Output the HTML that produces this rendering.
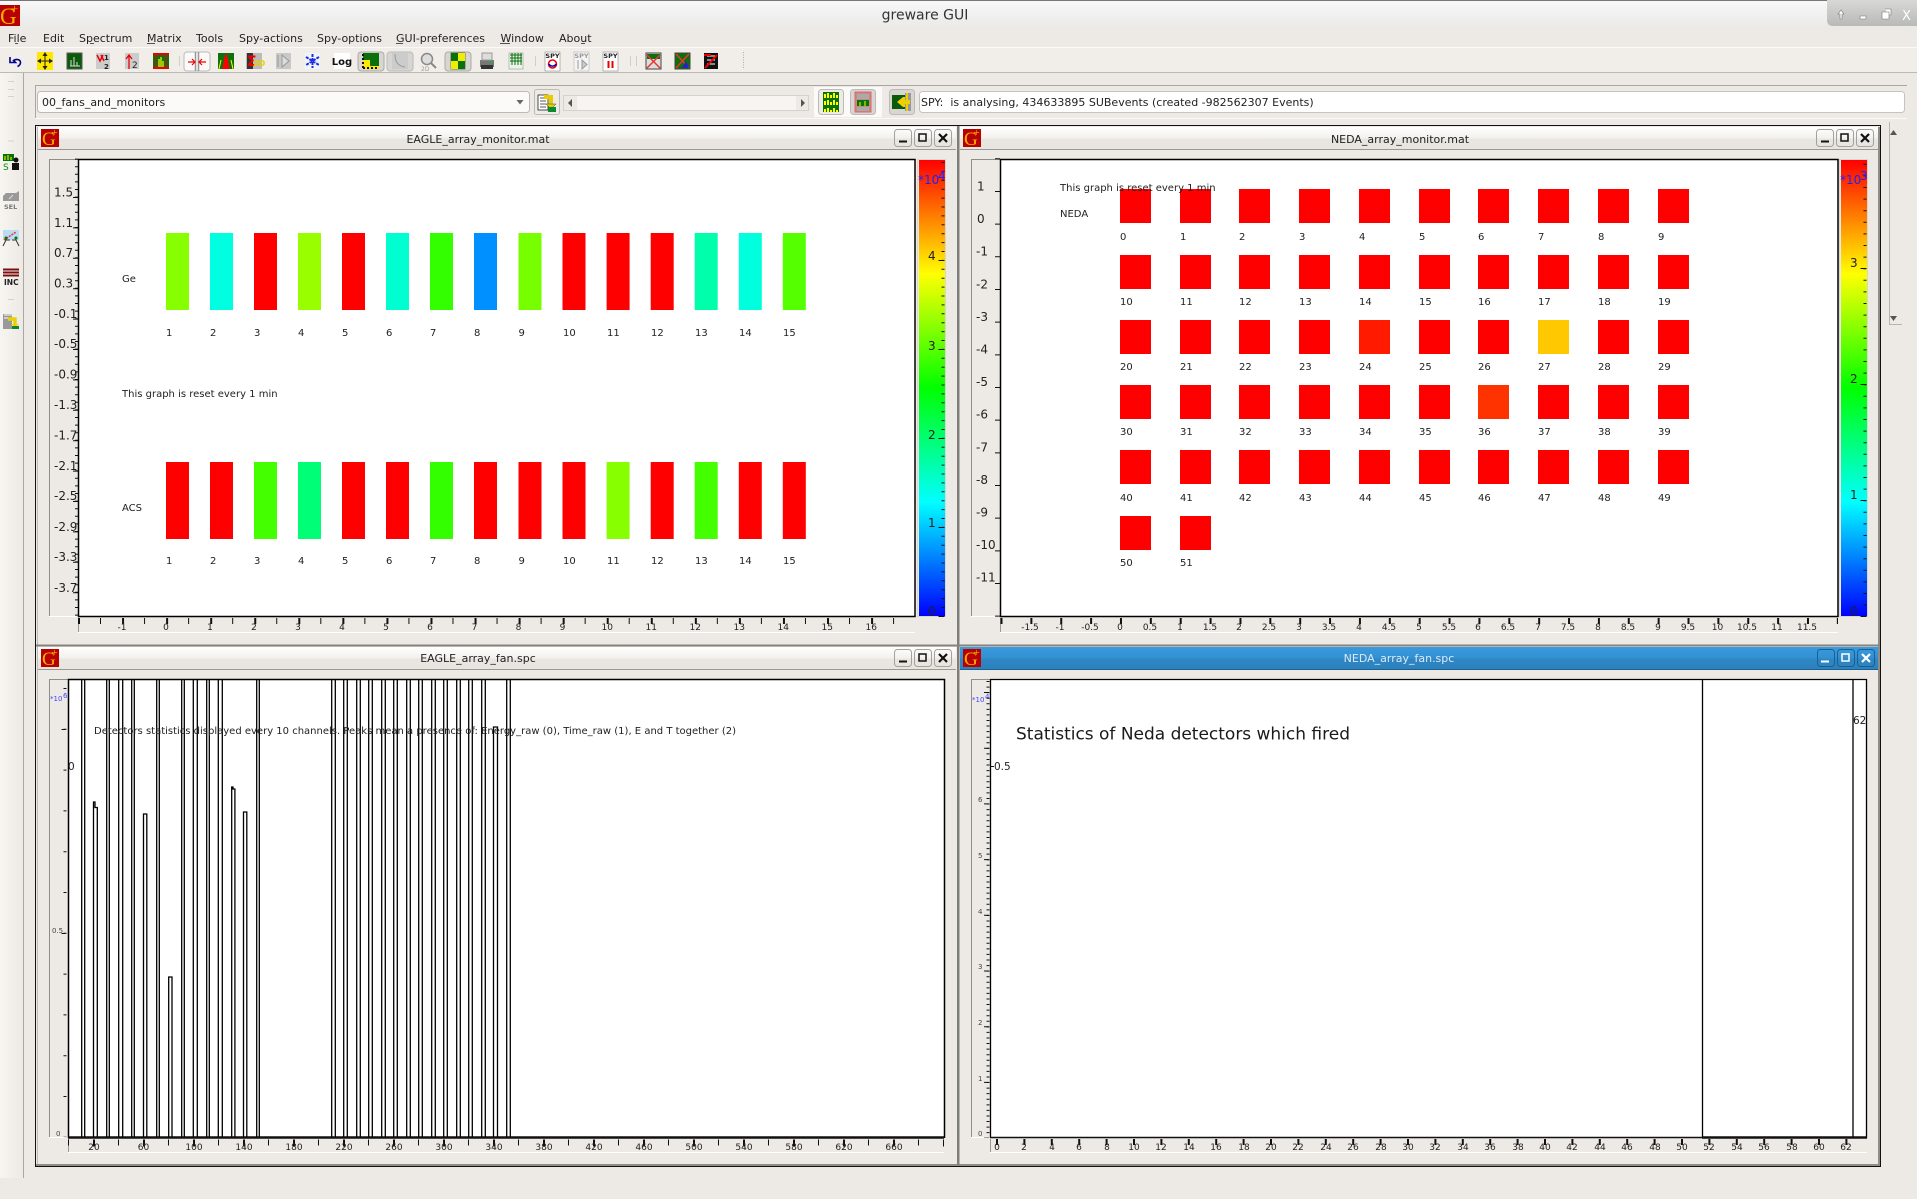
<!DOCTYPE html>
<html><head><meta charset="utf-8"><title>greware GUI</title>
<style>
html,body{margin:0;padding:0;width:1917px;height:1199px;overflow:hidden;background:#edeae5}
svg{display:block;font-family:"DejaVu Sans","Liberation Sans",sans-serif;fill:#222}
.m{font-size:11px}.t{font-size:11px;text-anchor:middle}.l{font-size:10px}.x{font-size:9px;text-anchor:middle;fill:#222}.y{font-size:12px}
.tn{font-size:7px;fill:#444}.b{font-size:12px;fill:#2222ff}.bs{font-size:7px;fill:#4444ff}
.lg{font-family:"Liberation Serif",serif;fill:#f7b000}
</style></head><body>
<svg width="1917" height="1199" viewBox="0 0 1917 1199" xmlns="http://www.w3.org/2000/svg">
<defs>
<linearGradient id="tb" x1="0" y1="0" x2="0" y2="1"><stop offset="0" stop-color="#f8f8f8"/><stop offset="1" stop-color="#e9e9e8"/></linearGradient>
<linearGradient id="wt" x1="0" y1="0" x2="0" y2="1"><stop offset="0" stop-color="#ffffff"/><stop offset=".5" stop-color="#f3f1ed"/><stop offset=".55" stop-color="#e9e6e1"/><stop offset="1" stop-color="#e8e5e0"/></linearGradient>
<linearGradient id="wa" x1="0" y1="0" x2="0" y2="1"><stop offset="0" stop-color="#399ade"/><stop offset=".5" stop-color="#3390d2"/><stop offset=".55" stop-color="#2e86c3"/><stop offset="1" stop-color="#2c82bd"/></linearGradient>
<linearGradient id="cb" x1="0" y1="0" x2="0" y2="1"><stop offset="0" stop-color="#ff0000"/><stop offset=".25" stop-color="#ffff00"/><stop offset=".5" stop-color="#00ff00"/><stop offset=".75" stop-color="#00ffff"/><stop offset="1" stop-color="#0000ff"/></linearGradient>
<linearGradient id="dk" x1="0" y1="0" x2="1" y2="0"><stop offset="0" stop-color="#f7f5f0"/><stop offset="1" stop-color="#edeae5"/></linearGradient>
<linearGradient id="wm" x1="0" y1="0" x2="0" y2="1"><stop offset="0" stop-color="#d8d8d6"/><stop offset="1" stop-color="#b9b9b7"/></linearGradient>
</defs>

<!-- main title bar -->
<rect width="1917" height="1199" fill="#edeae5"/>
<rect y="0" width="1917" height="29" fill="url(#tb)"/>
<rect width="1917" height="1" fill="#777"/>
<path d="M1827 0H1917V26H1833Q1827 26 1827 20Z" fill="url(#wm)"/>
<path d="M1841 10l-3 4h2v5h2v-5h2zM1860 16h6v3h-6zM1882 12h7v7h-7zM1885 9h6v6h-2" fill="#fff" stroke="#777" stroke-width=".6"/>
<text x="1902" y="20" style="font-size:13px;fill:#fff">X</text>
<text x="925" y="19.5" style="font-size:14px;text-anchor:middle;fill:#333">greware GUI</text>
<rect y="5" width="20" height="21" fill="#b80000"/>
<text x="0" y="24" class="lg" style="font-size:23px">G</text><text x="11" y="13" class="lg" style="font-size:13px">+</text>

<!-- menu -->
<g class="m"><text y="42"><tspan x="8">File</tspan><tspan x="43">Edit</tspan><tspan x="79">Spectrum</tspan><tspan x="147">Matrix</tspan><tspan x="196">Tools</tspan><tspan x="239">Spy-actions</tspan><tspan x="317">Spy-options</tspan><tspan x="396">GUI-preferences</tspan><tspan x="500.500">Window</tspan><tspan x="559">About</tspan></text></g>
<path d="M15 43.500h3M90 43.500h4M147 43.500h8M396 43.500h7M500 43.500h10M581 43.500h4" stroke="#222" stroke-width=".8"/>

<!-- toolbar -->
<rect y="47" width="1917" height="25" fill="#f1eeea"/>
<rect y="47" width="1917" height="1" fill="#fbfaf8"/>
<rect y="72" width="1917" height="1" fill="#bcbab5"/>
<path d="M179.500 56v10M535.500 56v10M630.500 56v10M636.500 56v10" stroke="#d0cec9"/>
<path d="M743.500 52v17" stroke="#aaa" stroke-dasharray="1 1.500"/>
<path d="M10 57l0 5.500 5.500 0-2-2c3-2 7-1 7 2 0 2-1 3-3 4" fill="none" stroke="#00008b" stroke-width="1.600"/>
<rect x="37" y="52" width="16" height="18" fill="#ffe800"/><path d="M45 54v14M39 61h12" stroke="#222" stroke-width="1"/><path d="M45 52l-2.500 4h5zM45 70l-2.500-4h5zM37 61l4-2.500v5zM53 61l-4-2.500v5z" fill="#222"/>
<rect x="67" y="53" width="15" height="16" fill="#0a5a0a" stroke="#555"/><path d="M71 66v-6M74 66v-9M77 66v-4M70 66h10" stroke="#ddd"/>
<rect x="96" y="53" width="14" height="16" fill="#ccc"/><path d="M97 55l3 6 3-6M101 55l3 6" stroke="#e00" fill="none" stroke-width="1.500"/><text x="104" y="60" style="font-size:7px;font-weight:bold">1</text><text x="104" y="69" style="font-size:7px;font-weight:bold">2</text>
<rect x="125" y="53" width="14" height="16" fill="#ccc"/><path d="M129 69V56M126 59l3-4 3 4" stroke="#e00" fill="none" stroke-width="1.300"/><text x="132" y="68" style="font-size:9px">2</text>
<rect x="153" y="53" width="16" height="16" fill="#107010"/><path d="M153 54h16M153 68h16" stroke="#e00" stroke-width="2"/><path d="M156 68V55M166 68V55" stroke="#e00"/><path d="M159 67v-8M161 67v-10M163 67v-6" stroke="#ff0" stroke-width="1.200"/>

<rect x="184" y="52" width="26" height="19" rx="3" fill="#fbfaf8" stroke="#bbb"/><path d="M195.500 52v19M198.500 52v19" stroke="#999" stroke-width="1.500"/><path d="M188 62h6M192 59l3 3-3 3M206 62h-6M202 59l-3 3 3 3" stroke="#e00" fill="none" stroke-width="1.200"/>
<rect x="218" y="53" width="16" height="16" fill="#107010"/><path d="M222 69c2-5 2-14 4-15 2 1 2 10 4 15z" fill="#f00"/><path d="M219 69l2-9M233 69l-2-9" stroke="#ff0"/>
<rect x="246" y="53" width="16" height="16" fill="#bbb"/><rect x="247" y="53" width="6" height="16" fill="#333"/><text x="247" y="66" style="font-size:14px;font-weight:bold;fill:#e00">Σ</text><text x="253" y="66" style="font-size:8px;fill:#e8d000;font-weight:bold">2D</text>
<rect x="276" y="53" width="15" height="16" fill="#c8c8c8"/><path d="M278 55v12M282 55l7 6-7 6z" stroke="#999" fill="#ddd"/>
<rect x="305" y="53" width="15" height="16" fill="#f0f4ff"/><path d="M312.500 54v14M306 57l13 8M319 57l-13 8" stroke="#1a2ce0" stroke-width="2" stroke-dasharray="3 1"/>
<rect x="334" y="53" width="16" height="16" fill="#fff"/><text x="342" y="65" style="font-size:10px;text-anchor:middle;fill:#111;font-weight:600">Log</text>

<rect x="358" y="52" width="26" height="19" rx="3" fill="#d9d6d1" stroke="#aaa"/><rect x="363" y="53" width="16" height="16" fill="#0a700a"/><path d="M363 60v9h16v-3h-9v-6z" fill="#ffe800"/><path d="M363 54v15M363 68h16" stroke="#111" stroke-dasharray="2 2" stroke-width="2"/>
<rect x="387" y="52" width="26" height="19" rx="3" fill="#d9d6d1" stroke="#bbb"/><rect x="392" y="53" width="16" height="16" fill="#ccc"/><path d="M395 54c0 8 3 12 10 13" stroke="#999" fill="none"/>
<circle cx="427" cy="59" r="5.500" fill="#ddd" stroke="#888" stroke-width="1.500"/><path d="M431 63l5 5" stroke="#888" stroke-width="2"/><text x="421" y="71" style="font-size:6px;fill:#999">2D</text>
<rect x="445" y="52" width="26" height="19" rx="3" fill="#d9d6d1" stroke="#aaa"/><rect x="451" y="53" width="14" height="16" fill="#fff" stroke="#333" stroke-width=".6"/><rect x="451" y="53" width="7" height="8" fill="#0a700a"/><rect x="458" y="61" width="7" height="8" fill="#0a700a"/><rect x="458" y="53" width="7" height="8" fill="#ee0"/><rect x="451" y="61" width="7" height="8" fill="#ee0"/>
<path d="M480 60h14v7h-14z" fill="#777"/><rect x="482" y="53" width="10" height="7" fill="#ddd" stroke="#999"/><rect x="481" y="65" width="12" height="4" fill="#333"/><circle cx="491" cy="62" r="1" fill="#0c0"/>
<rect x="509" y="53" width="14" height="16" fill="#eaf5ea" stroke="#888" stroke-width=".5"/><path d="M510 55h12M510 58h12M510 61h12M512 53v12M515 53v12M518 53v12M521 53v12" stroke="#0a700a"/>
<rect x="545" y="52" width="15" height="19" fill="#fff" stroke="#777" stroke-width=".5"/><text x="552.500" y="58" style="font-size:6.500px;text-anchor:middle;font-weight:bold;fill:#222">SPY</text><circle cx="552.500" cy="64" r="4" fill="none" stroke="#e00" stroke-width="1.500"/><path d="M549 64a4 4 0 0 0 7 0" stroke="#00c" fill="none" stroke-width="1.500"/>
<rect x="574" y="52" width="15" height="19" fill="#f4f4f4" stroke="#aaa" stroke-width=".5"/><text x="581.500" y="58" style="font-size:6.500px;text-anchor:middle;font-weight:bold;fill:#999">SPY</text><path d="M578 60v9M582 60l5 4.500-5 4.500z" stroke="#999" fill="#ccc"/>
<rect x="603" y="52" width="15" height="19" fill="#fff" stroke="#777" stroke-width=".5"/><text x="610.500" y="58" style="font-size:6.500px;text-anchor:middle;font-weight:bold;fill:#222">SPY</text><path d="M608.500 61v7M612.500 61v7" stroke="#e00" stroke-width="2"/>
<rect x="646" y="53" width="15" height="16" fill="#ddd" stroke="#444"/><rect x="647" y="54" width="13" height="5" fill="#0a700a"/><path d="M647 55l13 13M660 55l-13 13" stroke="#e33" stroke-width="1.500"/>
<rect x="675" y="53" width="15" height="16" fill="#0a700a" stroke="#444"/><path d="M676 54l13 14M689 54l-13 14" stroke="#e33" stroke-width="1.500"/><path d="M682 68l4-7 3 7z" fill="#22c"/>
<rect x="704" y="53" width="14" height="16" fill="#111"/><path d="M707 56h8M707 60h8M707 64h8" stroke="#fff"/><path d="M705 68l12-13M704 55h7" stroke="#e00" stroke-width="2"/>

<!-- left dock -->
<rect x="0" y="73" width="23" height="1105" fill="url(#dk)"/>
<rect x="23" y="73" width="1" height="1105" fill="#aaa8a3"/>
<path d="M8 81.500h6M8 89.500h6M8 96.500h6M8 141h6M8 299.500h6" stroke="#d5d2cd"/>
<rect x="3" y="154" width="11" height="7" fill="#0a700a"/><path d="M5 160v-4M8 160v-5M11 160v-3" stroke="#ff0"/><text x="3" y="170" style="font-size:9px;fill:#0a8a0a">S</text><circle cx="16" cy="160" r="2.500" fill="#111"/><rect x="12" y="163" width="7" height="7" fill="#111"/>
<path d="M3 196l3-3h10l3-2v10H3z" fill="#999"/><path d="M9 199l4-4" stroke="#ddd"/><text x="4" y="209" style="font-size:6.500px;fill:#777;font-weight:bold">SEL</text>
<rect x="3" y="230" width="16" height="10" fill="#bcdcf5"/><path d="M4 240l12-8" stroke="#e33" stroke-dasharray="2 1" stroke-width="1.500"/><path d="M3 246l3-6 4 0M19 246l-3-6-4 0" fill="none" stroke="#333"/><circle cx="6" cy="238" r="1.500" fill="#0a700a"/><circle cx="16" cy="238" r="1.500" fill="#0a700a"/>
<path d="M3 269.500h16M3 272.500h16M3 275.500h16" stroke="#7a1010" stroke-width="2"/><text x="4" y="285" style="font-size:7.500px;font-weight:bold;fill:#222">INC</text>
<path d="M3 314h9v15H3z" fill="#999"/><path d="M4 315h8M4 318h6" stroke="#fff"/><path d="M8 319h7v5" stroke="#eed000" stroke-width="3.500" fill="none"/><path d="M11 324h8l-4 3z" fill="#eed000"/><path d="M12 326h7v3h-7z" fill="#0a8a30"/>

<!-- second toolbar row -->
<rect x="35" y="85" width="1872" height="1" fill="#a9a7a2"/>
<rect x="35" y="85" width="1" height="33" fill="#a9a7a2"/>
<rect x="35" y="118" width="1872" height="1" fill="#fbfaf8"/>
<rect x="37.500" y="91.500" width="492" height="21" rx="3" fill="#fbfaf8" stroke="#bdbbb6"/>
<text x="42" y="106" class="m">00_fans_and_monitors</text>
<path d="M516.500 100h7l-3.500 4.500z" fill="#666"/>
<rect x="534.500" y="89.500" width="25" height="25" rx="2" fill="#eeebe6" stroke="#bdbbb6"/>
<rect x="538" y="95" width="10" height="15" fill="#fff" stroke="#222" stroke-width=".8"/><path d="M540 98h6M540 101h6M540 104h6M540 107h6" stroke="#222" stroke-width=".8"/><path d="M544 97h7v7" stroke="#e8cc00" stroke-width="4" fill="none"/><path d="M546 104h10l-5 5z" fill="#e8cc00" stroke="#444" stroke-width=".5"/><rect x="548" y="107" width="8" height="5" fill="#0a8a30"/>
<rect x="563.500" y="95.500" width="245" height="15" fill="#f7f5f1" stroke="#d5d2cd"/><rect x="564" y="96" width="13" height="14" fill="#edeae5"/><rect x="796" y="96" width="12" height="14" fill="#edeae5"/>
<path d="M572 99v8l-4-4zM801 99v8l4-4z" fill="#555"/>
<rect x="814" y="87" width="68" height="30" fill="#fbfaf8"/>
<rect x="818.500" y="89.500" width="25" height="25" rx="3" fill="#eeebe6" stroke="#bbb"/>
<rect x="823" y="92" width="16" height="20" fill="#0a700a"/><path d="M825 98v-4M828 98v-5M831 98v-3M834 98v-5M837 98v-3M825 105v-4M828 105v-5M831 105v-3M834 105v-5M837 105v-3M825 112v-3M828 112v-4M831 112v-2M834 112v-4M837 112v-2" stroke="#ff0" stroke-width="2"/>
<rect x="850.500" y="89.500" width="25" height="25" rx="3" fill="#d9d6d1" stroke="#bbb"/>
<rect x="855" y="92" width="16" height="20" fill="#c88" stroke="#d66"/><rect x="857" y="100" width="12" height="6" fill="#0a700a"/><path d="M860 106v-4M865 106v-5" stroke="#ff0"/><rect x="857" y="94" width="12" height="5" fill="#aaa"/><rect x="857" y="107" width="12" height="4" fill="#aaa"/>
<rect x="889.500" y="89.500" width="25" height="25" rx="3" fill="#d9d6d1" stroke="#bbb"/>
<rect x="892" y="95" width="13" height="14" fill="#0a5a0a"/><rect x="905" y="93" width="6" height="18" fill="#999"/><path d="M907 93v18M904 97v10" stroke="#eed000" stroke-width="2"/><path d="M897 102l6-5v3h7v4h-7v3z" fill="#eed000"/>
<rect x="919.500" y="91.500" width="985" height="21" rx="3" fill="#fff" stroke="#c5c3be"/>
<text x="921" y="106" class="m" xml:space="preserve">SPY:  is analysing, 434633895 SUBevents (created -982562307 Events)</text>

<!-- right scrollbar -->
<rect x="1889" y="125" width="18" height="199" fill="#edeae5"/>
<path d="M1889.500 122V324.500H1902" fill="none" stroke="#b5b3ae"/>
<path d="M1890 135l3.500-5 3.500 5zM1890 316h7l-3.500 5z" fill="#555"/>

<!-- MDI frame -->
<rect x="35.500" y="125.500" width="1845" height="1041" fill="#edeae5" stroke="#111"/>
<rect x="37" y="127" width="1" height="1038" fill="#bdbbb6"/>
<rect x="36" y="1164" width="1844" height="2" fill="#8f8d88"/>
<rect x="1878" y="127" width="2" height="1038" fill="#8f8d88"/>

<!-- title bars -->
<rect x="38" y="127" width="918" height="22" fill="url(#wt)"/><rect x="38" y="149" width="918" height="1" fill="#9a9893"/>
<rect x="960" y="127" width="918" height="22" fill="url(#wt)"/><rect x="960" y="149" width="918" height="1" fill="#9a9893"/>
<rect x="38" y="647" width="918" height="22" fill="url(#wt)"/><rect x="38" y="669" width="918" height="1" fill="#9a9893"/>
<rect x="960" y="647" width="918" height="22" fill="url(#wa)"/><rect x="960" y="669" width="918" height="1" fill="#1d5f8f"/>
<rect x="957" y="126" width="2.500" height="1039" fill="#7f7d79"/>
<rect x="36" y="644.500" width="1843" height="2" fill="#85837f"/>

<text x="478" y="143" class="t">EAGLE_array_monitor.mat</text>
<text x="1400" y="143" class="t">NEDA_array_monitor.mat</text>
<text x="478" y="662" class="t">EAGLE_array_fan.spc</text>
<text x="1399" y="662" class="t" style="fill:#dbe9f4">NEDA_array_fan.spc</text>

<!-- logos -->
<g>
<rect x="41" y="129" width="18" height="18" fill="#b80000"/><text x="42" y="145" class="lg" style="font-size:19px">G</text><text x="51.500" y="136" class="lg" style="font-size:11px">+</text>
<rect x="963" y="129" width="18" height="18" fill="#b80000"/><text x="964" y="145" class="lg" style="font-size:19px">G</text><text x="973.500" y="136" class="lg" style="font-size:11px">+</text>
<rect x="41" y="649" width="18" height="18" fill="#b80000"/><text x="42" y="665" class="lg" style="font-size:19px">G</text><text x="51.500" y="656" class="lg" style="font-size:11px">+</text>
<rect x="963" y="649" width="18" height="18" fill="#b80000"/><text x="964" y="665" class="lg" style="font-size:19px">G</text><text x="973.500" y="656" class="lg" style="font-size:11px">+</text>
</g>

<!-- window buttons -->
<g fill="none" stroke="#a3a19c">
<rect x="894.500" y="129.500" width="17" height="17" rx="3"/><rect x="914.500" y="129.500" width="17" height="17" rx="3"/><rect x="934.500" y="129.500" width="17" height="17" rx="3"/>
<rect x="1816.500" y="129.500" width="17" height="17" rx="3"/><rect x="1836.500" y="129.500" width="17" height="17" rx="3"/><rect x="1856.500" y="129.500" width="17" height="17" rx="3"/>
<rect x="894.500" y="649.500" width="17" height="17" rx="3"/><rect x="914.500" y="649.500" width="17" height="17" rx="3"/><rect x="934.500" y="649.500" width="17" height="17" rx="3"/>
</g>
<g fill="none" stroke="#1a5f92"><rect x="1817.500" y="649.500" width="17" height="17" rx="3"/><rect x="1837.500" y="649.500" width="17" height="17" rx="3"/><rect x="1857.500" y="649.500" width="17" height="17" rx="3"/></g>
<g fill="none" stroke="#111" stroke-width="2">
<path d="M899 141.500h8M1821 141.500h8M899 661.500h8"/>
<rect x="919" y="134" width="7" height="7" stroke-width="1.500"/><rect x="1841" y="134" width="7" height="7" stroke-width="1.500"/><rect x="919" y="654" width="7" height="7" stroke-width="1.500"/>
<path d="M939 134l8 8M947 134l-8 8M1861 134l8 8M1869 134l-8 8M939 654l8 8M947 654l-8 8" stroke-width="2.200"/>
</g>
<g fill="none" stroke="#fff" stroke-width="2">
<path d="M1821 661.500h8"/><rect x="1842" y="654" width="7" height="7" stroke-width="1.500"/><path d="M1862 654l8 8M1870 654l-8 8" stroke-width="2.200"/>
</g>

<!-- ===== EAGLE monitor ===== -->
<path d="M49.500 617V159.500H78" fill="none" stroke="#8f8d88"/>
<path d="M49 616.500h29M78 632.500h837" stroke="#fff"/>
<path d="M78.500 618v14" stroke="#999"/>
<rect x="78" y="159" width="837" height="457" fill="#fff"/>
<rect x="78.500" y="159.500" width="836.500" height="457" fill="none" stroke="#000" stroke-width="1.500"/>
<path d="M76.500 158.600V616" stroke="#111" stroke-width="3" stroke-dasharray="1 6.600" fill="none"/>
<path d="M75.500 197V616" stroke="#111" stroke-width="5" stroke-dasharray="1 29.400" fill="none"/>
<path d="M78 621H915" stroke="#111" stroke-width="6" stroke-dasharray="2 42.060"/>
<path d="M100 621H915" stroke="#111" stroke-width="6" stroke-dasharray="1 43.060"/>
<g class="y"><text x="54" y="196.500">1.5</text><text x="54" y="227">1.1</text><text x="54" y="257">0.7</text><text x="54" y="287.500">0.3</text><text x="54" y="318">-0.1</text><text x="54" y="348">-0.5</text><text x="54" y="378.500">-0.9</text><text x="54" y="409">-1.3</text><text x="54" y="439.500">-1.7</text><text x="54" y="470">-2.1</text><text x="54" y="500">-2.5</text><text x="54" y="531">-2.9</text><text x="54" y="561">-3.3</text><text x="54" y="592">-3.7</text></g>
<text class="x" y="630"><tspan x="122">-1</tspan><tspan x="166">0</tspan><tspan x="210">1</tspan><tspan x="254">2</tspan><tspan x="298">3</tspan><tspan x="342">4</tspan><tspan x="386">5</tspan><tspan x="430">6</tspan><tspan x="474.500">7</tspan><tspan x="518.500">8</tspan><tspan x="562.500">9</tspan><tspan x="607.200">10</tspan><tspan x="651.200">11</tspan><tspan x="695.200">12</tspan><tspan x="739.200">13</tspan><tspan x="783.200">14</tspan><tspan x="827.200">15</tspan><tspan x="871.200">16</tspan></text>
<g>
<rect x="166" y="233" width="23" height="77" fill="#88ff00"/><rect x="210" y="233" width="23" height="77" fill="#00ffe0"/><rect x="254" y="233" width="23" height="77" fill="#ff0000"/><rect x="298" y="233" width="23" height="77" fill="#99ff00"/><rect x="342" y="233" width="23" height="77" fill="#ff0000"/><rect x="386" y="233" width="23" height="77" fill="#00ffd0"/><rect x="430" y="233" width="23" height="77" fill="#33ff00"/><rect x="474" y="233" width="23" height="77" fill="#0090ff"/><rect x="518.500" y="233" width="23" height="77" fill="#77ff00"/><rect x="562.500" y="233" width="23" height="77" fill="#ff0000"/><rect x="606.600" y="233" width="23" height="77" fill="#ff0000"/><rect x="650.700" y="233" width="23" height="77" fill="#ff0000"/><rect x="694.700" y="233" width="23" height="77" fill="#00ffaa"/><rect x="738.800" y="233" width="23" height="77" fill="#00ffdd"/><rect x="782.800" y="233" width="23" height="77" fill="#55ff00"/>
<rect x="166" y="462" width="23" height="77" fill="#ff0000"/><rect x="210" y="462" width="23" height="77" fill="#ff0000"/><rect x="254" y="462" width="23" height="77" fill="#44ff00"/><rect x="298" y="462" width="23" height="77" fill="#00ff77"/><rect x="342" y="462" width="23" height="77" fill="#ff0000"/><rect x="386" y="462" width="23" height="77" fill="#ff0000"/><rect x="430" y="462" width="23" height="77" fill="#33ff00"/><rect x="474" y="462" width="23" height="77" fill="#ff0000"/><rect x="518.500" y="462" width="23" height="77" fill="#ff0000"/><rect x="562.500" y="462" width="23" height="77" fill="#ff0000"/><rect x="606.600" y="462" width="23" height="77" fill="#88ff00"/><rect x="650.700" y="462" width="23" height="77" fill="#ff0000"/><rect x="694.700" y="462" width="23" height="77" fill="#44ff00"/><rect x="738.800" y="462" width="23" height="77" fill="#ff0000"/><rect x="782.800" y="462" width="23" height="77" fill="#ff0000"/>
</g>
<g class="l">
<text y="336"><tspan x="166">1</tspan><tspan x="210">2</tspan><tspan x="254">3</tspan><tspan x="298">4</tspan><tspan x="342">5</tspan><tspan x="386">6</tspan><tspan x="430">7</tspan><tspan x="474">8</tspan><tspan x="518.500">9</tspan><tspan x="563">10</tspan><tspan x="607">11</tspan><tspan x="651">12</tspan><tspan x="695">13</tspan><tspan x="739">14</tspan><tspan x="783">15</tspan></text>
<text y="564"><tspan x="166">1</tspan><tspan x="210">2</tspan><tspan x="254">3</tspan><tspan x="298">4</tspan><tspan x="342">5</tspan><tspan x="386">6</tspan><tspan x="430">7</tspan><tspan x="474">8</tspan><tspan x="518.500">9</tspan><tspan x="563">10</tspan><tspan x="607">11</tspan><tspan x="651">12</tspan><tspan x="695">13</tspan><tspan x="739">14</tspan><tspan x="783">15</tspan></text>
<text x="122" y="282">Ge</text><text x="122" y="397">This graph is reset every 1 min</text><text x="122" y="511">ACS</text>
</g>
<!-- colorbar -->
<rect x="917.500" y="159.500" width="28" height="457" fill="none" stroke="#d8d6d1"/>
<rect x="919" y="160" width="26" height="456" fill="url(#cb)"/>
<path d="M943 162V616" stroke="#111" stroke-width="3" stroke-dasharray="1 7.900"/>
<path d="M941.500 260V617" stroke="#111" stroke-width="6" stroke-dasharray="1 88"/>
<g class="y"><text x="928" y="260">4</text><text x="928" y="350">3</text><text x="928" y="439">2</text><text x="928" y="527">1</text><text x="928" y="615.500">0</text></g>
<text x="918" y="184" class="b">*10</text><text x="938" y="180" class="b">4</text>

<!-- ===== NEDA monitor ===== -->
<path d="M971.500 617V159.500H1000" fill="none" stroke="#8f8d88"/>
<path d="M971 616.500h29M1000 632.500h838" stroke="#fff"/>
<path d="M1000.500 618v14" stroke="#999"/>
<rect x="1000" y="159" width="838" height="457" fill="#fff"/>
<rect x="1000.500" y="159.500" width="837.500" height="457" fill="none" stroke="#000" stroke-width="1.500"/>
<path d="M997.500 158.300V617" stroke="#111" stroke-width="5" stroke-dasharray="1 31.670" fill="none"/>
<path d="M1000.500 621H1838" stroke="#111" stroke-width="6" stroke-dasharray="2 27.870"/>
<g class="y"><text x="977" y="190.500">1</text><text x="977" y="223">0</text><text x="976" y="255.700">-1</text><text x="976" y="288.300">-2</text><text x="976" y="320.900">-3</text><text x="976" y="353.500">-4</text><text x="976" y="386">-5</text><text x="976" y="418.700">-6</text><text x="976" y="451.300">-7</text><text x="976" y="484">-8</text><text x="976" y="516.500">-9</text><text x="976" y="549">-10</text><text x="976" y="581.500">-11</text></g>
<text class="x" y="630"><tspan x="1030">-1.5</tspan><tspan x="1060">-1</tspan><tspan x="1090">-0.5</tspan><tspan x="1120">0</tspan><tspan x="1150">0.5</tspan><tspan x="1180">1</tspan><tspan x="1210">1.5</tspan><tspan x="1239">2</tspan><tspan x="1269">2.5</tspan><tspan x="1299">3</tspan><tspan x="1329">3.5</tspan><tspan x="1359">4</tspan><tspan x="1389">4.5</tspan><tspan x="1419">5</tspan><tspan x="1449">5.5</tspan><tspan x="1478">6</tspan><tspan x="1508">6.5</tspan><tspan x="1538">7</tspan><tspan x="1568">7.5</tspan><tspan x="1598">8</tspan><tspan x="1628">8.5</tspan><tspan x="1658">9</tspan><tspan x="1688">9.5</tspan><tspan x="1717.500">10</tspan><tspan x="1747">10.5</tspan><tspan x="1777">11</tspan><tspan x="1807">11.5</tspan></text>
<g fill="#ff0000">
<path d="M1120 189h31v34h-31zM1180 189h31v34h-31zM1239 189h31v34h-31zM1299 189h31v34h-31zM1359 189h31v34h-31zM1419 189h31v34h-31zM1478 189h31v34h-31zM1538 189h31v34h-31zM1598 189h31v34h-31zM1658 189h31v34h-31z"/>
<path d="M1120 255h31v34h-31zM1180 255h31v34h-31zM1239 255h31v34h-31zM1299 255h31v34h-31zM1359 255h31v34h-31zM1419 255h31v34h-31zM1478 255h31v34h-31zM1538 255h31v34h-31zM1598 255h31v34h-31zM1658 255h31v34h-31z"/>
<path d="M1120 320h31v34h-31zM1180 320h31v34h-31zM1239 320h31v34h-31zM1299 320h31v34h-31zM1419 320h31v34h-31zM1478 320h31v34h-31zM1598 320h31v34h-31zM1658 320h31v34h-31z"/>
<path d="M1120 385h31v34h-31zM1180 385h31v34h-31zM1239 385h31v34h-31zM1299 385h31v34h-31zM1359 385h31v34h-31zM1419 385h31v34h-31zM1538 385h31v34h-31zM1598 385h31v34h-31zM1658 385h31v34h-31z"/>
<path d="M1120 450h31v34h-31zM1180 450h31v34h-31zM1239 450h31v34h-31zM1299 450h31v34h-31zM1359 450h31v34h-31zM1419 450h31v34h-31zM1478 450h31v34h-31zM1538 450h31v34h-31zM1598 450h31v34h-31zM1658 450h31v34h-31z"/>
<path d="M1120 516h31v34h-31zM1180 516h31v34h-31z"/>
</g>
<rect x="1359" y="320" width="31" height="34" fill="#ff1a00"/>
<rect x="1538" y="320" width="31" height="34" fill="#ffc800"/>
<rect x="1478" y="385" width="31" height="34" fill="#ff3300"/>
<g class="l">
<g transform="translate(-1 0)">
<text y="240"><tspan x="1121">0</tspan><tspan x="1181">1</tspan><tspan x="1240">2</tspan><tspan x="1300">3</tspan><tspan x="1360">4</tspan><tspan x="1420">5</tspan><tspan x="1479">6</tspan><tspan x="1539">7</tspan><tspan x="1599">8</tspan><tspan x="1659">9</tspan></text>
<text y="305"><tspan x="1121">10</tspan><tspan x="1181">11</tspan><tspan x="1240">12</tspan><tspan x="1300">13</tspan><tspan x="1360">14</tspan><tspan x="1420">15</tspan><tspan x="1479">16</tspan><tspan x="1539">17</tspan><tspan x="1599">18</tspan><tspan x="1659">19</tspan></text>
<text y="370"><tspan x="1121">20</tspan><tspan x="1181">21</tspan><tspan x="1240">22</tspan><tspan x="1300">23</tspan><tspan x="1360">24</tspan><tspan x="1420">25</tspan><tspan x="1479">26</tspan><tspan x="1539">27</tspan><tspan x="1599">28</tspan><tspan x="1659">29</tspan></text>
<text y="435"><tspan x="1121">30</tspan><tspan x="1181">31</tspan><tspan x="1240">32</tspan><tspan x="1300">33</tspan><tspan x="1360">34</tspan><tspan x="1420">35</tspan><tspan x="1479">36</tspan><tspan x="1539">37</tspan><tspan x="1599">38</tspan><tspan x="1659">39</tspan></text>
<text y="501"><tspan x="1121">40</tspan><tspan x="1181">41</tspan><tspan x="1240">42</tspan><tspan x="1300">43</tspan><tspan x="1360">44</tspan><tspan x="1420">45</tspan><tspan x="1479">46</tspan><tspan x="1539">47</tspan><tspan x="1599">48</tspan><tspan x="1659">49</tspan></text>
<text y="566"><tspan x="1121">50</tspan><tspan x="1181">51</tspan></text>
</g>
<text x="1060" y="191">This graph is reset every 1 min</text><text x="1060" y="217">NEDA</text>
</g>
<rect x="1839.500" y="159.500" width="28" height="457" fill="none" stroke="#d8d6d1"/>
<rect x="1841" y="160" width="26" height="456" fill="url(#cb)"/>
<path d="M1865 163.800V616" stroke="#111" stroke-width="3" stroke-dasharray="1 10.600"/>
<path d="M1863.500 268V617" stroke="#111" stroke-width="6" stroke-dasharray="1 115"/>
<g class="y"><text x="1850" y="267">3</text><text x="1850" y="383">2</text><text x="1850" y="499">1</text><text x="1850" y="615.500">0</text></g>
<text x="1840" y="184" class="b">*10</text><text x="1860" y="180" class="b">3</text>

<!-- ===== EAGLE fan ===== -->
<path d="M49.500 1137V679.500H68" fill="none" stroke="#8f8d88"/>
<path d="M49 1137.500h15M68 1152.500h876" stroke="#fff"/>
<path d="M68.500 1139v13" stroke="#999"/>
<rect x="68" y="679" width="876" height="458" fill="#fff"/>
<path d="M68.500 1138V679.500H944.500V1138" fill="none" stroke="#000" stroke-width="1.500"/>
<path d="M68 1137.500H944" stroke="#111" stroke-width="2.500"/>
<path d="M81.700 1137V680M84.700 1137V680M106.700 1137V680M109.300 1137V680M118.700 1137V680M122.700 1137V680M131.700 1137V680M134.300 1137V680M156.700 1137V680M159.300 1137V680M181.700 1137V680M184.300 1137V680M193.300 1137V680M197.300 1137V680M206.700 1137V680M209.300 1137V680M218.300 1137V680M222.300 1137V680M256.700 1137V680M259.300 1137V680M331.700 1137V680M335.300 1137V680M343.700 1137V680M347.300 1137V680M356.700 1137V680M360.300 1137V680M368.700 1137V680M372.300 1137V680M381.700 1137V680M385.300 1137V680M393.700 1137V680M397.300 1137V680M406.700 1137V680M410.300 1137V680M418.700 1137V680M422.300 1137V680M431.700 1137V680M435.300 1137V680M443.700 1137V680M447.300 1137V680M456.700 1137V680M460.300 1137V680M468.700 1137V680M472.300 1137V680M481.700 1137V680M485.300 1137V680M506.700 1137V680M510.300 1137V680M493.500 1137V727H497.500V1137" stroke="#000" stroke-width="1.300" fill="none"/>
<path d="M93.500 1137V802H95V807.500H97.300V1137M143.500 1137V814H146.800V1137M168.700 1137V977H172V1137M231.700 1137V787H233V789H234.900V1137M243.500 1137V812H246.800V1137" stroke="#000" stroke-width="1.300" fill="none"/>
<path d="M65 688V1137" stroke="#111" stroke-dasharray="1 39.800" stroke-width="3"/>
<path d="M63.500 729V760M63.500 933V934" stroke="#111" stroke-dasharray="1 40" stroke-width="4"/>
<path d="M68 1142.500H944" stroke="#111" stroke-width="6" stroke-dasharray="1 49"/>
<path d="M93 1143H944" stroke="#111" stroke-width="7" stroke-dasharray="2 48"/>
<text class="x" y="1150"><tspan x="94">20</tspan><tspan x="143.500">60</tspan><tspan x="194">100</tspan><tspan x="244">140</tspan><tspan x="294">180</tspan><tspan x="344">220</tspan><tspan x="394">260</tspan><tspan x="444">300</tspan><tspan x="494">340</tspan><tspan x="544">380</tspan><tspan x="594">420</tspan><tspan x="644">460</tspan><tspan x="694">500</tspan><tspan x="744">540</tspan><tspan x="794">580</tspan><tspan x="844">620</tspan><tspan x="894">660</tspan></text>
<text x="50" y="701" class="bs">*10</text><text x="63" y="698" class="bs">6</text>
<text x="52" y="933" class="tn">0.5</text><text x="56" y="1136" class="tn">0</text>
<text x="68" y="770" style="font-size:10.500px">0</text>
<text x="94" y="734" class="l" style="fill:#222" textLength="642" lengthAdjust="spacing">Detectors statistics displayed every 10 channels. Peaks mean a presence of: Energy_raw (0), Time_raw (1), E and T together (2)</text>

<!-- ===== NEDA fan ===== -->
<path d="M971.500 1137V679.500H990" fill="none" stroke="#8f8d88"/>
<path d="M971 1137.500h15M990 1152.500h877" stroke="#fff"/>
<path d="M990.500 1139v13" stroke="#999"/>
<rect x="990" y="679" width="877" height="458" fill="#fff"/>
<path d="M990.500 1138V679.500H1866.500V1138" fill="none" stroke="#000" stroke-width="1.300"/>
<path d="M990 1137.500H1702" stroke="#111" stroke-width="1.500"/>
<path d="M1702 1137.500H1867" stroke="#111" stroke-width="2.500"/>
<path d="M1702.500 1137V680M1853 1137V680" stroke="#000" stroke-width="1.300"/>
<path d="M988 681V1137" stroke="#111" stroke-width="3" stroke-dasharray="1 4.570"/>
<path d="M986.500 692V1138" stroke="#111" stroke-width="5" stroke-dasharray="1 54.700"/>
<path d="M996 1142H1867" stroke="#111" stroke-width="6" stroke-dasharray="2 25.400"/>
<text class="x" y="1150"><tspan x="997">0</tspan><tspan x="1024">2</tspan><tspan x="1052">4</tspan><tspan x="1079">6</tspan><tspan x="1107">8</tspan><tspan x="1134">10</tspan><tspan x="1161">12</tspan><tspan x="1189">14</tspan><tspan x="1216">16</tspan><tspan x="1244">18</tspan><tspan x="1271">20</tspan><tspan x="1298">22</tspan><tspan x="1326">24</tspan><tspan x="1353">26</tspan><tspan x="1381">28</tspan><tspan x="1408">30</tspan><tspan x="1435">32</tspan><tspan x="1463">34</tspan><tspan x="1490">36</tspan><tspan x="1518">38</tspan><tspan x="1545">40</tspan><tspan x="1572">42</tspan><tspan x="1600">44</tspan><tspan x="1627">46</tspan><tspan x="1655">48</tspan><tspan x="1682">50</tspan><tspan x="1709">52</tspan><tspan x="1737">54</tspan><tspan x="1764">56</tspan><tspan x="1792">58</tspan><tspan x="1819">60</tspan><tspan x="1846">62</tspan></text>
<text x="972" y="702" class="bs">*10</text><text x="985" y="699" class="bs">4</text>
<g class="tn"><text x="978" y="802">6</text><text x="978" y="858">5</text><text x="978" y="914">4</text><text x="978" y="969">3</text><text x="978" y="1025">2</text><text x="978" y="1081">1</text><text x="978" y="1136">0</text></g>
<text x="1016" y="739.500" style="font-size:17px;fill:#1a1a1a" textLength="334">Statistics of Neda detectors which fired</text>
<text x="994" y="770" style="font-size:10.500px;text-anchor:start">0.5</text><path d="M990 766.500h4" stroke="#111"/>
<text x="1853" y="724" class="l" style="font-size:10.500px">62</text>
</svg>
</body></html>
